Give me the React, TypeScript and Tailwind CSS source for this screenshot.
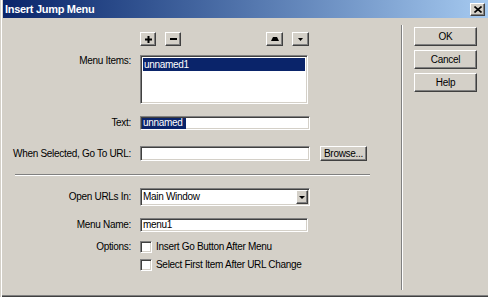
import React from "react";

const raised =
  "border border-t-white border-l-white border-b-[#404040] border-r-[#404040] shadow-[inset_-1px_-1px_0_#808080] bg-[#d4d0c8]";
const sunken =
  "border border-t-[#808080] border-l-[#808080] border-b-white border-r-white shadow-[inset_1px_1px_0_#404040,inset_-1px_-1px_0_#d4d0c8] bg-white";

function Label({ children, top }: { children: React.ReactNode; top?: boolean }) {
  return (
    <div className={`w-[128px] shrink-0 text-right pr-0 ${top ? "self-start pt-[1px]" : ""}`}>{children}</div>
  );
}

function Check({ label }: { label: string }) {
  return (
    <div className="flex items-center">
      <div className="w-[12px] h-[12px] border border-t-[#808080] border-l-[#808080] border-b-white border-r-white shadow-[inset_1px_1px_0_#404040,inset_-1px_-1px_0_#d4d0c8] bg-white" />
      <span className="ml-[4px]">{label}</span>
    </div>
  );
}

function RightButton({ children }: { children: React.ReactNode }) {
  return (
    <div className={`${raised} w-[63px] h-[19px] flex items-center justify-center`}>{children}</div>
  );
}

export default function App() {
  return (
    <div className="w-[488px] h-[297px] bg-[#d4d0c8] flex flex-col pl-[3px] pb-[2px] shadow-[inset_1px_0_0_#d4d0c8,inset_2px_0_0_#ffffff,inset_0_-1px_0_#404040,inset_0_-2px_0_#808080] font-['Liberation_Sans',Arial,sans-serif] text-[10px] tracking-[-0.3px] leading-none text-black overflow-hidden">
      {/* title bar */}
      <div className="h-[18px] shrink-0 flex items-center justify-between bg-gradient-to-r from-[#0a246a] to-[#a6caf0] pl-[2px] pr-[3px]">
        <span className="text-white font-bold text-[11px]">Insert Jump Menu</span>
        <div className={`${raised} w-[15px] h-[13px] flex items-center justify-center`}>
          <svg width="8" height="7" viewBox="0 0 8 7">
            <path d="M0.5 0.5 L7.5 6.5 M7.5 0.5 L0.5 6.5" stroke="#000" strokeWidth="1.6" />
          </svg>
        </div>
      </div>

      <div className="flex flex-1">
        {/* left form */}
        <div className="w-[398px] flex flex-col">
          {/* list buttons */}
          <div className="flex mt-[14px] ml-[137px]">
            <div className={`${raised} w-[16px] h-[14px] flex items-center justify-center`}>
              <svg width="7" height="7" viewBox="0 0 7 7">
                <path d="M3.5 0 V7 M0 3.5 H7" stroke="#000" strokeWidth="2" />
              </svg>
            </div>
            <div className={`${raised} w-[16px] h-[14px] ml-[9px] flex items-center justify-center`}>
              <svg width="7" height="2" viewBox="0 0 7 2">
                <rect x="0" y="0" width="7" height="2" fill="#000" />
              </svg>
            </div>
            <div className={`${raised} w-[17px] h-[14px] ml-[85px] flex items-center justify-center`}>
              <svg width="8" height="4" viewBox="0 0 8 4">
                <path d="M2 0 H6 L8 4 H0 Z" fill="#000" />
              </svg>
            </div>
            <div className={`${raised} w-[17px] h-[14px] ml-[9px] flex items-center justify-center`}>
              <svg width="5" height="3" viewBox="0 0 5 3">
                <path d="M0 0 H5 L2.5 3 Z" fill="#000" />
              </svg>
            </div>
          </div>

          {/* Menu items */}
          <div className="flex mt-[9px]">
            <Label top>Menu Items:</Label>
            <div className={`${sunken} ml-[9px] w-[168px] h-[49px] p-[2px]`}>
              <div className="h-[13px] bg-[#0a246a] text-white flex items-center pl-[1px]">unnamed1</div>
            </div>
          </div>

          {/* Text */}
          <div className="flex items-center mt-[12px]">
            <Label>Text:</Label>
            <div className={`${sunken} ml-[9px] w-[170px] h-[14px] flex items-center pl-[1px]`}>
              <span className="bg-[#0a246a] text-white h-[11px] flex items-center pr-[3px] pl-[1px]">unnamed</span>
            </div>
          </div>

          {/* URL */}
          <div className="flex items-center mt-[16px]">
            <Label>When Selected, Go To URL:</Label>
            <div className={`${sunken} ml-[9px] w-[170px] h-[15px]`} />
            <div className={`${raised} ml-[10px] w-[47px] h-[15px] flex items-center justify-center`}>Browse...</div>
          </div>

          {/* separator */}
          <div className="mt-[13px] ml-[12px] w-[355px] h-[2px] border-t border-t-[#808080] border-b border-b-white" />

          {/* Open URLs In */}
          <div className="flex items-center mt-[12px]">
            <Label>Open URLs In:</Label>
            <div className={`${sunken} ml-[9px] w-[170px] h-[18px] flex items-center justify-between pl-[2px] pr-[1px]`}>
              <span>Main Window</span>
              <div className={`${raised} w-[12px] h-[14px] flex items-center justify-center`}>
                <svg width="6" height="3" viewBox="0 0 6 3">
                  <path d="M0 0 H6 L3 3 Z" fill="#000" />
                </svg>
              </div>
            </div>
          </div>

          {/* Menu Name */}
          <div className="flex items-center mt-[12px]">
            <Label>Menu Name:</Label>
            <div className={`${sunken} ml-[9px] w-[168px] h-[14px] flex items-center pl-[2px]`}>menu1</div>
          </div>

          {/* Options */}
          <div className="flex items-center mt-[9px]">
            <Label>Options:</Label>
            <div className="ml-[9px]">
              <Check label="Insert Go Button After Menu" />
            </div>
          </div>
          <div className="flex items-center mt-[6px] ml-[137px]">
            <Check label="Select First Item After URL Change" />
          </div>
        </div>

        {/* vertical separator */}
        <div className="w-[2px] mt-[7px] mb-[5px] border-l border-l-[#808080] border-r border-r-white" />

        {/* right buttons */}
        <div className="flex flex-col gap-[4px] pt-[9px] pl-[11px]">
          <RightButton>OK</RightButton>
          <RightButton>Cancel</RightButton>
          <RightButton>Help</RightButton>
        </div>
      </div>
    </div>
  );
}
